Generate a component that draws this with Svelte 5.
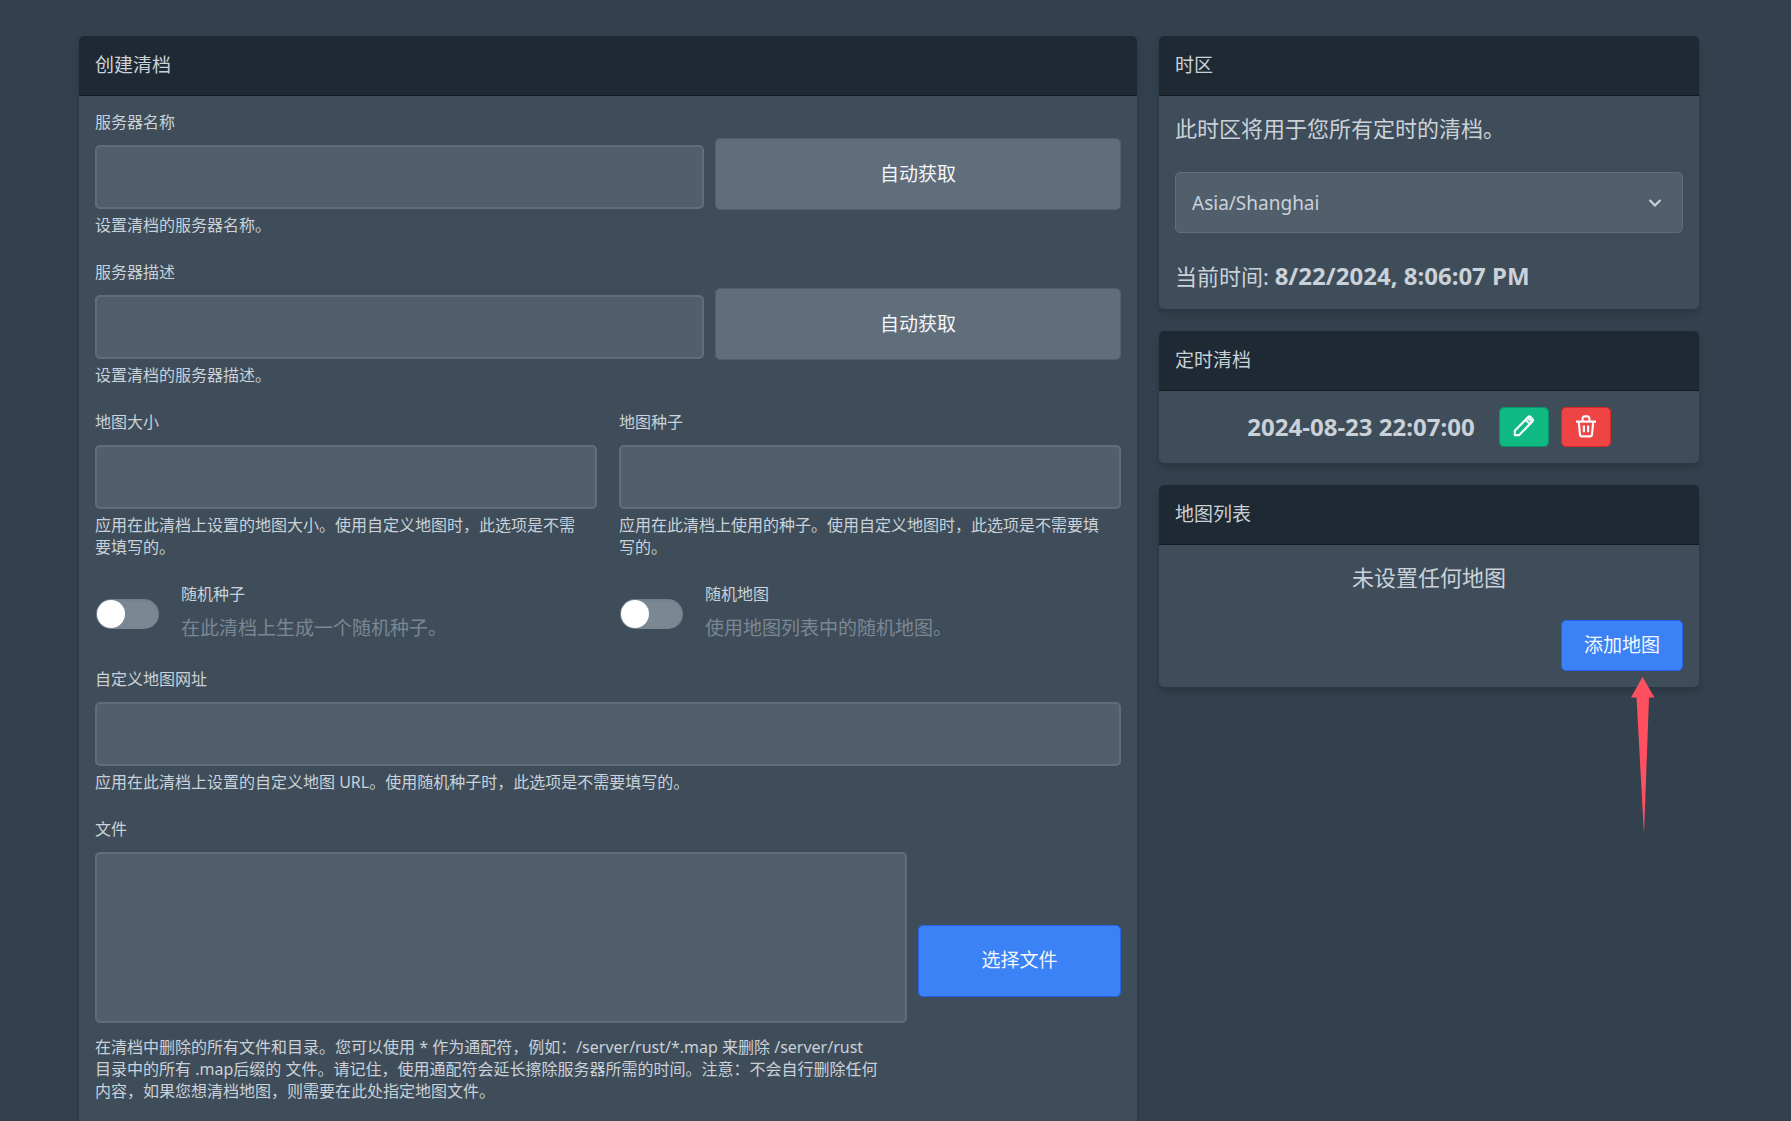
<script lang="ts">
  let serverName = '';
  let serverDescription = '';
  let mapSize = '';
  let mapSeed = '';
  let randomSeed = false;
  let randomMap = false;
  let customMapUrl = '';
  let files = '';
  let timezone = 'Asia/Shanghai';

  const timezones = ['Asia/Shanghai', 'Asia/Tokyo', 'Europe/London', 'UTC'];
  const currentTime = '8/22/2024, 8:06:07 PM';
  const scheduledWipes = ['2024-08-23 22:07:00'];
</script>

<main class="page">
  <section class="card form-card">
    <h2 class="card-header">创建清档</h2>
    <form class="card-body form" on:submit|preventDefault>
      <div class="row with-action">
        <div class="field">
          <label for="server-name">服务器名称</label>
          <input id="server-name" class="text-input" type="text" bind:value={serverName} />
          <p class="help">设置清档的服务器名称。</p>
        </div>
        <button type="button" class="btn btn-large">自动获取</button>
      </div>

      <div class="row with-action">
        <div class="field">
          <label for="server-description">服务器描述</label>
          <input id="server-description" class="text-input" type="text" bind:value={serverDescription} />
          <p class="help">设置清档的服务器描述。</p>
        </div>
        <button type="button" class="btn btn-large">自动获取</button>
      </div>

      <div class="row halves">
        <div class="field">
          <label for="map-size">地图大小</label>
          <input id="map-size" class="text-input" type="text" bind:value={mapSize} />
          <p class="help help-half">应用在此清档上设置的地图大小。使用自定义地图时，此选项是不需要填写的。</p>
        </div>
        <div class="field">
          <label for="map-seed">地图种子</label>
          <input id="map-seed" class="text-input" type="text" bind:value={mapSeed} />
          <p class="help help-half">应用在此清档上使用的种子。使用自定义地图时，此选项是不需要填写的。</p>
        </div>
      </div>

      <div class="row halves">
        <div class="switch-field">
          <input id="random-seed" class="switch" type="checkbox" bind:checked={randomSeed} />
          <div>
            <label for="random-seed">随机种子</label>
            <p class="switch-text">在此清档上生成一个随机种子。</p>
          </div>
        </div>
        <div class="switch-field">
          <input id="random-map" class="switch" type="checkbox" bind:checked={randomMap} />
          <div>
            <label for="random-map">随机地图</label>
            <p class="switch-text">使用地图列表中的随机地图。</p>
          </div>
        </div>
      </div>

      <div class="field">
        <label for="custom-map">自定义地图网址</label>
        <input id="custom-map" class="text-input" type="text" bind:value={customMapUrl} />
        <p class="help">应用在此清档上设置的自定义地图 URL。使用随机种子时，此选项是不需要填写的。</p>
      </div>

      <div class="row with-small-action">
        <div class="field">
          <label for="files">文件</label>
          <textarea id="files" class="text-input" bind:value={files}></textarea>
          <p class="help help-files">
            在清档中删除的所有文件和目录。您可以使用 * 作为通配符，例如：/server/rust/*.map 来删除 /server/rust 目录中的所有 .map后缀的 文件。请记住，使用通配符会延长擦除服务器所需的时间。注意：不会自行删除任何内容，如果您想清档地图，则需要在此处指定地图文件。
          </p>
        </div>
        <button type="button" class="btn btn-large btn-primary">选择文件</button>
      </div>
    </form>
  </section>

  <div class="side">
    <section class="card">
      <h2 class="card-header">时区</h2>
      <div class="card-body timezone">
        <label class="lead" for="timezone">此时区将用于您所有定时的清档。</label>
        <div class="select-wrap">
          <select id="timezone" bind:value={timezone}>
            {#each timezones as zone}
              <option value={zone}>{zone}</option>
            {/each}
          </select>
          <svg class="chevron" viewBox="0 0 20 20" aria-hidden="true">
            <path d="M9.293 12.95l.707.707L15.657 8l-1.414-1.414L10 10.828 5.757 6.586 4.343 8z" fill="currentColor" />
          </svg>
        </div>
        <p class="lead">当前时间: <strong>{currentTime}</strong></p>
      </div>
    </section>

    <section class="card">
      <h2 class="card-header">定时清档</h2>
      <div class="card-body">
        {#each scheduledWipes as wipe}
          <div class="wipe">
            <p class="lead"><strong>{wipe}</strong></p>
            <div class="wipe-actions">
              <button type="button" class="btn btn-icon btn-green" aria-label="编辑">
                <svg viewBox="0 0 26 26" aria-hidden="true">
                  <path d="M3.8 21.2V16.8L17.2 3.1a1.7 1.7 0 0 1 2.4 0L21.4 5a1.7 1.7 0 0 1 0 2.4L8 21.2ZM14.6 5.8l4.2 4.2M17 3.9l3.6 3.6" />
                </svg>
              </button>
              <button type="button" class="btn btn-icon btn-red" aria-label="删除">
                <svg viewBox="0 0 26 26" aria-hidden="true">
                  <path d="M3 7.7H23M9.6 7.4V4.4a2 2 0 0 1 2-2h2.8a2 2 0 0 1 2 2V7.4M5.8 8l1.2 12.6a2 2 0 0 0 2 1.8h8a2 2 0 0 0 2-1.8L20.2 8M10.9 11.6v6.6M15.1 11.6v6.6" />
                </svg>
              </button>
            </div>
          </div>
        {/each}
      </div>
    </section>

    <section class="card">
      <h2 class="card-header">地图列表</h2>
      <div class="card-body maps">
        <p class="lead">未设置任何地图</p>
        <div class="add-map">
          <button type="button" class="btn btn-primary">添加地图</button>
          <svg class="pointer" viewBox="0 0 24 158" aria-hidden="true">
            <path d="M11.5 0L23.5 20.5H18L13 158L5.5 20.5H0Z" fill="#ff5060" />
          </svg>
        </div>
      </div>
    </section>
  </div>
</main>

<style>
  :global(body) {
    background: #33404d;
    color: #cad1d8;
    font-family: 'Noto Sans', 'Noto Sans CJK SC', sans-serif;
  }

  .page {
    display: grid;
    grid-template-columns: minmax(0, 1058fr) minmax(0, 540fr);
    gap: 22px;
    align-items: start;
    box-sizing: border-box;
    max-width: 1778px;
    padding: 36px 79px 0;
  }

  h2,
  p {
    margin: 0;
    font-weight: 400;
  }

  .card {
    background: #3f4d5a;
    border-radius: 5px;
    box-shadow: 0 5px 8px -1px rgba(0, 0, 0, 0.12), 0 3px 5px -1px rgba(0, 0, 0, 0.08);
  }

  .form-card {
    min-height: calc(100vh - 30px);
  }

  .card-header {
    padding: 15px 16px;
    border-bottom: 1px solid #131a20;
    border-radius: 5px 5px 0 0;
    background: #1f2933;
    font-size: 19px;
    line-height: 29px;
  }

  .card-body {
    padding: 16px;
  }

  .form {
    display: flex;
    flex-direction: column;
    gap: 26px;
  }

  .row {
    display: grid;
    align-items: center;
  }

  .with-action {
    grid-template-columns: 3fr 2fr;
    gap: 11px;
  }

  .with-small-action {
    grid-template-columns: 4fr 1fr;
    gap: 11px;
  }

  .halves {
    grid-template-columns: 1fr 1fr;
    gap: 22px;
  }

  .field {
    display: flex;
    flex-direction: column;
  }

  .field label,
  .switch-field label {
    display: block;
    font-size: 16px;
    line-height: 21px;
  }

  .text-input {
    box-sizing: border-box;
    width: 100%;
    height: 64px;
    margin: 12px 0 5px;
    padding: 16px;
    border: 2px solid #606d7b;
    border-radius: 5px;
    background: #515f6c;
    color: inherit;
    font: inherit;
    font-size: 19px;
    outline: none;
  }

  textarea.text-input {
    height: 171px;
    margin-bottom: 13px;
    resize: none;
  }

  .help {
    font-size: 16px;
    line-height: 22px;
  }

  .help-half {
    max-width: 30em;
  }

  .help-files {
    max-width: 788px;
  }

  .switch-field {
    display: flex;
    align-items: center;
    gap: 22px;
  }

  .switch {
    appearance: none;
    display: flex;
    flex: none;
    box-sizing: border-box;
    width: 63px;
    height: 30px;
    margin: 0 0 0 1px;
    padding: 1px;
    border-radius: 15px;
    background: #7b8793;
    box-shadow: inset 0 1px 3px rgba(0, 0, 0, 0.1);
    cursor: pointer;
  }

  .switch::before {
    content: '';
    width: 28px;
    height: 28px;
    border-radius: 50%;
    background: #fff;
  }

  .switch:checked {
    justify-content: flex-end;
    background: #3b82f6;
  }

  .switch-text {
    margin-top: 9px;
    color: #7b8793;
    font-size: 19px;
    line-height: 29px;
  }

  .btn {
    box-sizing: border-box;
    padding: 10px 22px;
    border: 1px solid #515f6c;
    border-radius: 5px;
    background: #606d7b;
    color: #f5f7fa;
    font: inherit;
    font-size: 19px;
    line-height: 29px;
    cursor: pointer;
  }

  .btn-large {
    width: 100%;
    height: 72px;
  }

  .btn-primary {
    border-color: #2563eb;
    background: #3b82f6;
  }

  .btn-icon {
    display: flex;
    align-items: center;
    justify-content: center;
    width: 50px;
    height: 40px;
    padding: 0;
  }

  .btn-icon svg {
    width: 26px;
    height: 26px;
    fill: none;
    stroke: currentColor;
    stroke-width: 2.2;
    stroke-linejoin: round;
  }

  .btn-green {
    border-color: #059669;
    background: #10b981;
  }

  .btn-red {
    border-color: #dc2626;
    background: #ef4444;
  }

  .side {
    display: flex;
    flex-direction: column;
    gap: 22px;
  }

  .lead {
    font-size: 22px;
    line-height: 33px;
  }

  .lead strong {
    font-size: 24px;
    line-height: 1;
  }

  .timezone {
    display: flex;
    flex-direction: column;
    gap: 27px;
  }

  .select-wrap {
    position: relative;
  }

  select {
    appearance: none;
    display: block;
    width: 100%;
    height: 61px;
    padding: 0 44px 0 16px;
    border: 1px solid #606d7b;
    border-radius: 5px;
    background: #515f6c;
    color: inherit;
    font: inherit;
    font-size: 19px;
  }

  .chevron {
    position: absolute;
    top: 20px;
    right: 17px;
    width: 22px;
    height: 22px;
    pointer-events: none;
  }

  .wipe {
    display: flex;
    align-items: center;
    justify-content: center;
    gap: 24px;
  }

  .wipe-actions {
    display: flex;
    gap: 12px;
  }

  .maps {
    display: flex;
    flex-direction: column;
    gap: 26px;
    text-align: center;
  }

  .add-map {
    position: relative;
    align-self: flex-end;
  }

  .add-map .btn {
    display: block;
  }

  /* arrow hangs below the button, over the card edge */
  .pointer {
    position: absolute;
    top: calc(100% + 6px);
    right: 28px;
    width: 24px;
    height: 158px;
    pointer-events: none;
  }
</style>
